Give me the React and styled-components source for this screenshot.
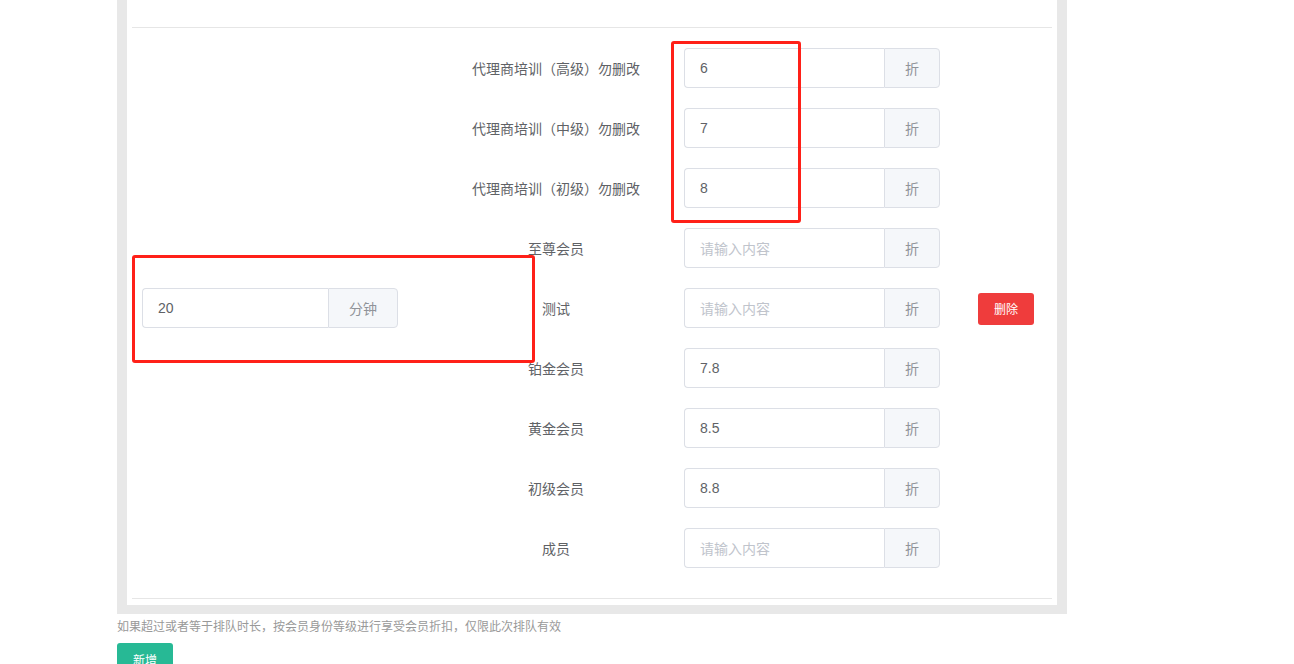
import React from "react";
import styled, { createGlobalStyle } from "styled-components";

const Global = createGlobalStyle`
  html, body { margin: 0; padding: 0; background: #fff; }
  body {
    font-family: "Liberation Sans", "Noto Sans CJK SC", sans-serif;
    font-size: 14px;
    color: #606266;
  }
`;

const Page = styled.div`
  position: relative;
  width: 1294px;
  height: 664px;
  overflow: hidden;
  padding-left: 117px;
  box-sizing: border-box;
`;

const Frame = styled.div`
  width: 950px;
  box-sizing: border-box;
  background: #e8e8e8;
  padding: 0 10px 9px 10px;
`;

const Inner = styled.div`
  background: #fff;
  padding: 0 5px 6px 5px;
`;

const TopBar = styled.div`
  height: 27px;
  border-bottom: 1px solid #e6e6e6;
`;

const Body = styled.div`
  display: flex;
  align-items: center;
  padding: 20px 0 30px 0;
  border-bottom: 1px solid #e6e6e6;
`;

const LeftCol = styled.div`
  width: 340px;
  box-sizing: border-box;
  padding-left: 10px;
  display: flex;
  align-items: center;
`;

const Rows = styled.div`
  display: flex;
  flex-direction: column;
  gap: 20px;
`;

const Row = styled.div`
  display: flex;
  align-items: center;
  height: 40px;
`;

const Label = styled.div`
  width: 168px;
  text-align: center;
  color: #606266;
  font-size: 14px;
  margin-right: 44px;
  margin-top: -1px;
  white-space: nowrap;
`;

const Group = styled.div`
  display: flex;
  width: ${(p) => p.$w}px;
  height: 40px;
`;

const Field = styled.div`
  flex: 1;
  box-sizing: border-box;
  height: 40px;
  border: 1px solid #dcdfe6;
  border-right: none;
  border-radius: 4px 0 0 4px;
  padding: 0 15px;
  display: flex;
  align-items: center;
  font-size: 14px;
  color: ${(p) => (p.$empty ? "#c0c4cc" : "#606266")};
`;

const Addon = styled.div`
  width: ${(p) => p.$w}px;
  box-sizing: border-box;
  height: 40px;
  background: #f5f7fa;
  border: 1px solid #dcdfe6;
  border-radius: 0 4px 4px 0;
  display: flex;
  align-items: center;
  justify-content: center;
  color: #909399;
  font-size: 14px;
`;

const Button = styled.button`
  box-sizing: border-box;
  height: 32px;
  width: 56px;
  padding: 0;
  border: none;
  border-radius: 3px;
  background: ${(p) => p.$bg};
  color: #fff;
  font-family: "Liberation Sans", "Noto Sans CJK SC", sans-serif;
  font-size: 12px;
  display: flex;
  align-items: center;
  justify-content: center;
`;

const DeleteWrap = styled.div`
  margin-left: 38px;
  margin-top: 1px;
`;

const Note = styled.div`
  margin-top: 5px;
  font-size: 12px;
  color: #999;
  line-height: 16px;
`;

const Actions = styled.div`
  margin-top: 8px;
`;

const Mark = styled.div`
  position: absolute;
  border: 3px solid #ff2018;
  border-radius: 3px;
  box-sizing: border-box;
`;

const rows = [
  { label: "代理商培训（高级）勿删改", value: "6" },
  { label: "代理商培训（中级）勿删改", value: "7" },
  { label: "代理商培训（初级）勿删改", value: "8" },
  { label: "至尊会员", value: "" },
  { label: "测试", value: "", del: true },
  { label: "铂金会员", value: "7.8" },
  { label: "黄金会员", value: "8.5" },
  { label: "初级会员", value: "8.8" },
  { label: "成员", value: "" },
];

export default function App() {
  return (
    <Page>
      <Global />
      <Frame>
        <Inner>
          <TopBar />
          <Body>
            <LeftCol>
              <Group $w={256}>
                <Field>20</Field>
                <Addon $w={70}>分钟</Addon>
              </Group>
            </LeftCol>
            <Rows>
              {rows.map((r, i) => (
                <Row key={i}>
                  <Label>{r.label}</Label>
                  <Group $w={256}>
                    <Field $empty={!r.value}>{r.value || "请输入内容"}</Field>
                    <Addon $w={56}>折</Addon>
                  </Group>
                  {r.del && (
                    <DeleteWrap>
                      <Button $bg="#ef3c3c">删除</Button>
                    </DeleteWrap>
                  )}
                </Row>
              ))}
            </Rows>
          </Body>
        </Inner>
      </Frame>
      <Note>如果超过或者等于排队时长，按会员身份等级进行享受会员折扣，仅限此次排队有效</Note>
      <Actions>
        <Button $bg="#27b995">新增</Button>
      </Actions>
      <Mark style={{ left: 671, top: 41, width: 130, height: 182 }} />
      <Mark style={{ left: 132, top: 255, width: 403, height: 108 }} />
    </Page>
  );
}
